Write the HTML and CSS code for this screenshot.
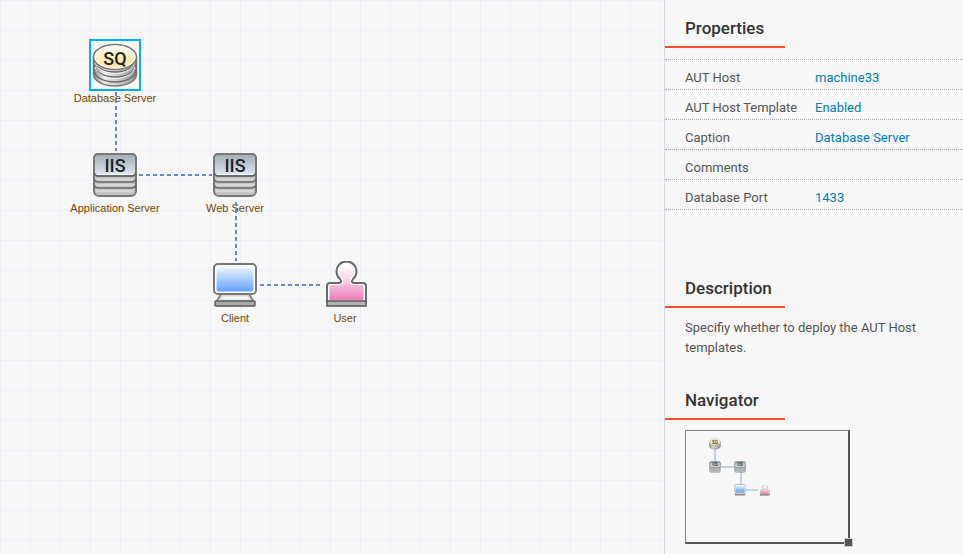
FILE: index.html
```html
<!DOCTYPE html>
<html lang="en">
<head>
<meta charset="utf-8">
<title>Topology</title>
<link rel="stylesheet" href="styles.css">
</head>
<body>
<svg class="defs" aria-hidden="true">
  <defs>
    <linearGradient id="gold" x1="0" y1="0" x2="0" y2="1"><stop offset="0" stop-color="#fff"/><stop offset=".3" stop-color="#fff6d8"/><stop offset=".8" stop-color="#ffe3a0"/><stop offset="1" stop-color="#fff1cc"/></linearGradient>
    <linearGradient id="metal" x1="0" y1="0" x2="1" y2="0"><stop offset="0" stop-color="#888"/><stop offset=".25" stop-color="#eee"/><stop offset=".5" stop-color="#d2d2d2"/><stop offset="1" stop-color="#999"/></linearGradient>
    <linearGradient id="steel" x1="0" y1="0" x2="0" y2="1"><stop offset="0" stop-color="#a4abb2"/><stop offset=".6" stop-color="#c5d0da"/><stop offset="1" stop-color="#e2edf6"/></linearGradient>
    <linearGradient id="screen" x1="0" y1="0" x2="0" y2="1"><stop offset="0" stop-color="#f4f9ff"/><stop offset=".5" stop-color="#a9cdff"/><stop offset="1" stop-color="#62a1ff"/></linearGradient>
    <linearGradient id="pink" gradientUnits="userSpaceOnUse" x1="0" y1="4" x2="0" y2="38"><stop offset="0" stop-color="#fff"/><stop offset=".5" stop-color="#f9c9e1"/><stop offset="1" stop-color="#eb81b9"/></linearGradient>
    <symbol id="database" viewBox="0 0 48 48">
      <path d="M2.500 16v17c0 7 9.500 12 21.500 12s21.500-5 21.500-12V16z" fill="url(#metal)" stroke="#777" stroke-width="1.500"/>
      <path d="M3 19c0 7 10 12 21 12s21-5 21-12M3 24c0 7 10 12 21 12s21-5 21-12M3 29c0 7 10 12 21 12s21-5 21-12" fill="none" stroke="#6c6c6c" stroke-width="1.500"/>
      <path d="M4 21c1 7 10 11.500 20 11.500s19-4.500 20-11.500M4 26c1 7 10 11.500 20 11.500s19-4.500 20-11.500" fill="none" stroke="#f1f1f1"/>
      <ellipse cx="24" cy="16" rx="21.500" ry="12.500" fill="url(#gold)" stroke="#777" stroke-width="1.500"/>
      <ellipse cx="24" cy="16" rx="20" ry="11" fill="none" stroke="#fff"/>
      <text class="glyph" x="24" y="24">SQ</text>
    </symbol>
    <symbol id="server" viewBox="0 0 48 48">
      <rect x="3" y="3" width="42" height="42" rx="5" fill="#c4c4c4" stroke="#777" stroke-width="2"/>
      <path d="M5 28.500h38M5 34h38M5 40h38" stroke="#d6d6d6" stroke-width="2"/>
      <path d="M3 28q1 3 5 3h32q4 0 5-3M3 34q1 3 5 3h32q4 0 5-3" fill="none" stroke="#686868" stroke-width="1.500"/>
      <rect x="3" y="3" width="42" height="22" rx="4" fill="url(#steel)" stroke="#777" stroke-width="2"/>
      <path d="M5 23.500h38" stroke="#f6fbff"/>
      <path d="M3 22q1 3 5 3h32q4 0 5-3" fill="none" stroke="#686868" stroke-width="1.500"/>
      <text class="glyph" x="24" y="21">IIS</text>
    </symbol>
    <symbol id="client" viewBox="0 0 48 48">
      <path d="M10 33h28l5 8H5z" fill="#d4dcdc" stroke="#777" stroke-width="1.500"/>
      <path d="M12 35.500h24l2 3H10z" fill="#f3f5f5"/>
      <rect x="4" y="40" width="40" height="5" rx="1" fill="#aaa" stroke="#5a5a5a" stroke-width="1.500"/>
      <rect x="3" y="3" width="42" height="30" rx="4" fill="#fff" stroke="#777" stroke-width="2"/>
      <rect x="5.500" y="5.500" width="37" height="25" rx="2" fill="url(#screen)"/>
    </symbol>
    <symbol id="user" viewBox="0 0 48 48">
      <path d="M6 41V25q0-3 3-3h8q5 0 2-4a10 10 0 1 1 13 0q-3 4 2 4h8q3 0 3 3v16z" fill="#fff" stroke="#6a6a6a" stroke-width="2"/>
      <path d="M8.500 39V26q0-2 2-2h8q6-1 3-7a8 8 0 1 1 8 0q-3 6 3 7h8q2 0 2 2v13z" fill="url(#pink)"/>
      <rect x="6" y="40" width="39" height="5" fill="#b2b2b2" stroke="#555" stroke-width="1.500"/>
    </symbol>
  </defs>
</svg>
<main class="app">
  <section class="canvas" aria-label="Topology">
    <button class="node database selected"><svg class="icon"><use href="#database"/></svg><span>Database Server</span></button>
    <button class="node application"><svg class="icon"><use href="#server"/></svg><span>Application Server</span></button>
    <button class="node web"><svg class="icon"><use href="#server"/></svg><span>Web Server</span></button>
    <button class="node client"><svg class="icon"><use href="#client"/></svg><span>Client</span></button>
    <button class="node user"><svg class="icon"><use href="#user"/></svg><span>User</span></button>
    <svg class="links" aria-hidden="true"><path d="M116 92v59M139 175h73M236 202v59M260 285h61"/></svg>
  </section>
  <aside class="panel">
    <section class="properties">
      <h2>Properties</h2>
      <dl>
        <div><dt>AUT Host</dt><dd>machine33</dd></div>
        <div><dt>AUT Host Template</dt><dd>Enabled</dd></div>
        <div><dt>Caption</dt><dd>Database Server</dd></div>
        <div><dt>Comments</dt><dd></dd></div>
        <div><dt>Database Port</dt><dd>1433</dd></div>
      </dl>
    </section>
    <section class="description">
      <h2>Description</h2>
      <p>Specifiy whether to deploy the AUT Host templates.</p>
    </section>
    <section class="navigator">
      <h2>Navigator</h2>
      <div class="overview">
        <svg class="map" viewBox="0 0 162 111" aria-hidden="true">
          <path d="M29 18v14M35 36h13M55 41v14M60 59h12" fill="none" stroke="#8ca8dc" stroke-width="1"/>
          <use href="#database" x="23" y="7" width="12" height="12"/>
          <use href="#server" x="23" y="30" width="12" height="12"/>
          <use href="#server" x="48" y="30" width="12" height="12"/>
          <use href="#client" x="48" y="53" width="12" height="12"/>
          <use href="#user" x="73" y="54" width="11" height="11"/>
        </svg>
        <span class="handle"></span>
      </div>
    </section>
  </aside>
</main>
</body>
</html>
```
FILE: styles.css
```css
* { box-sizing: border-box; }
body { margin: 0; background: #f7f7f7; font-family: Roboto, sans-serif; }
.defs { position: absolute; width: 0; height: 0; }
.app { display: grid; grid-template-columns: 1fr 299px; min-height: 100vh; }
.canvas {
  position: relative;
  margin-right: 2px;
  background-image: linear-gradient(#eeeef9 1px, transparent 1px), linear-gradient(90deg, #eeeef9 1px, transparent 1px);
  background-size: 30px 30px;
}
.node {
  position: absolute;
  display: flex;
  flex-direction: column;
  align-items: center;
  width: 120px;
  padding: 0;
  border: 0;
  background: none;
  color: #744600;
  font: 11px/14px "Liberation Sans", sans-serif;
}
.icon { width: 52px; height: 52px; padding: 2px; }
.selected .icon { border: 2px solid #00adff; padding: 0; }
.database { left: 55px; top: 39px; }
.application { left: 55px; top: 149px; }
.web { left: 175px; top: 149px; }
.client { left: 175px; top: 259px; }
.user { left: 285px; top: 259px; }
.links { position: absolute; left: 0; top: 0; width: 100%; height: 100%; pointer-events: none; }
.links path { fill: none; stroke: #6688c6; stroke-width: 2; stroke-dasharray: 4 3; }
.glyph { font: 500 18px Roboto, sans-serif; text-anchor: middle; fill: #222; }
.panel { border-left: 1px solid #d8d8dd; color: #555; font-size: 13px; line-height: 20px; }
h2 {
  width: 120px;
  margin: 0;
  padding: 16px 0 6px 20px;
  border-bottom: 2px solid #ff4c2e;
  color: #333;
  font-size: 17px;
  line-height: 24px;
  font-weight: 500;
}
dl { margin: 11px 0 0; border-top: 1px dotted #aaa; }
dl div { display: grid; grid-template-columns: 130px 1fr; height: 30px; padding: 8px 0 0 20px; border-bottom: 1px dotted #aaa; }
dd { margin: 0; color: #007dba; }
.description { margin-top: 50px; }
p { margin: 10px 20px 0; }
.navigator { margin-top: 14px; }
.overview {
  position: relative;
  width: 165px;
  margin: 10px 0 0 20px;
  border: 2px solid #555;
  border-width: 1px 2px 2px 1px;
  border-top-color: #808080;
  border-left-color: #808080;
}
.map { display: block; width: 100%; height: 111px; }
.handle { position: absolute; right: -5px; bottom: -5px; width: 9px; height: 9px; border: 1px solid #ccc; background: #555; }
```
